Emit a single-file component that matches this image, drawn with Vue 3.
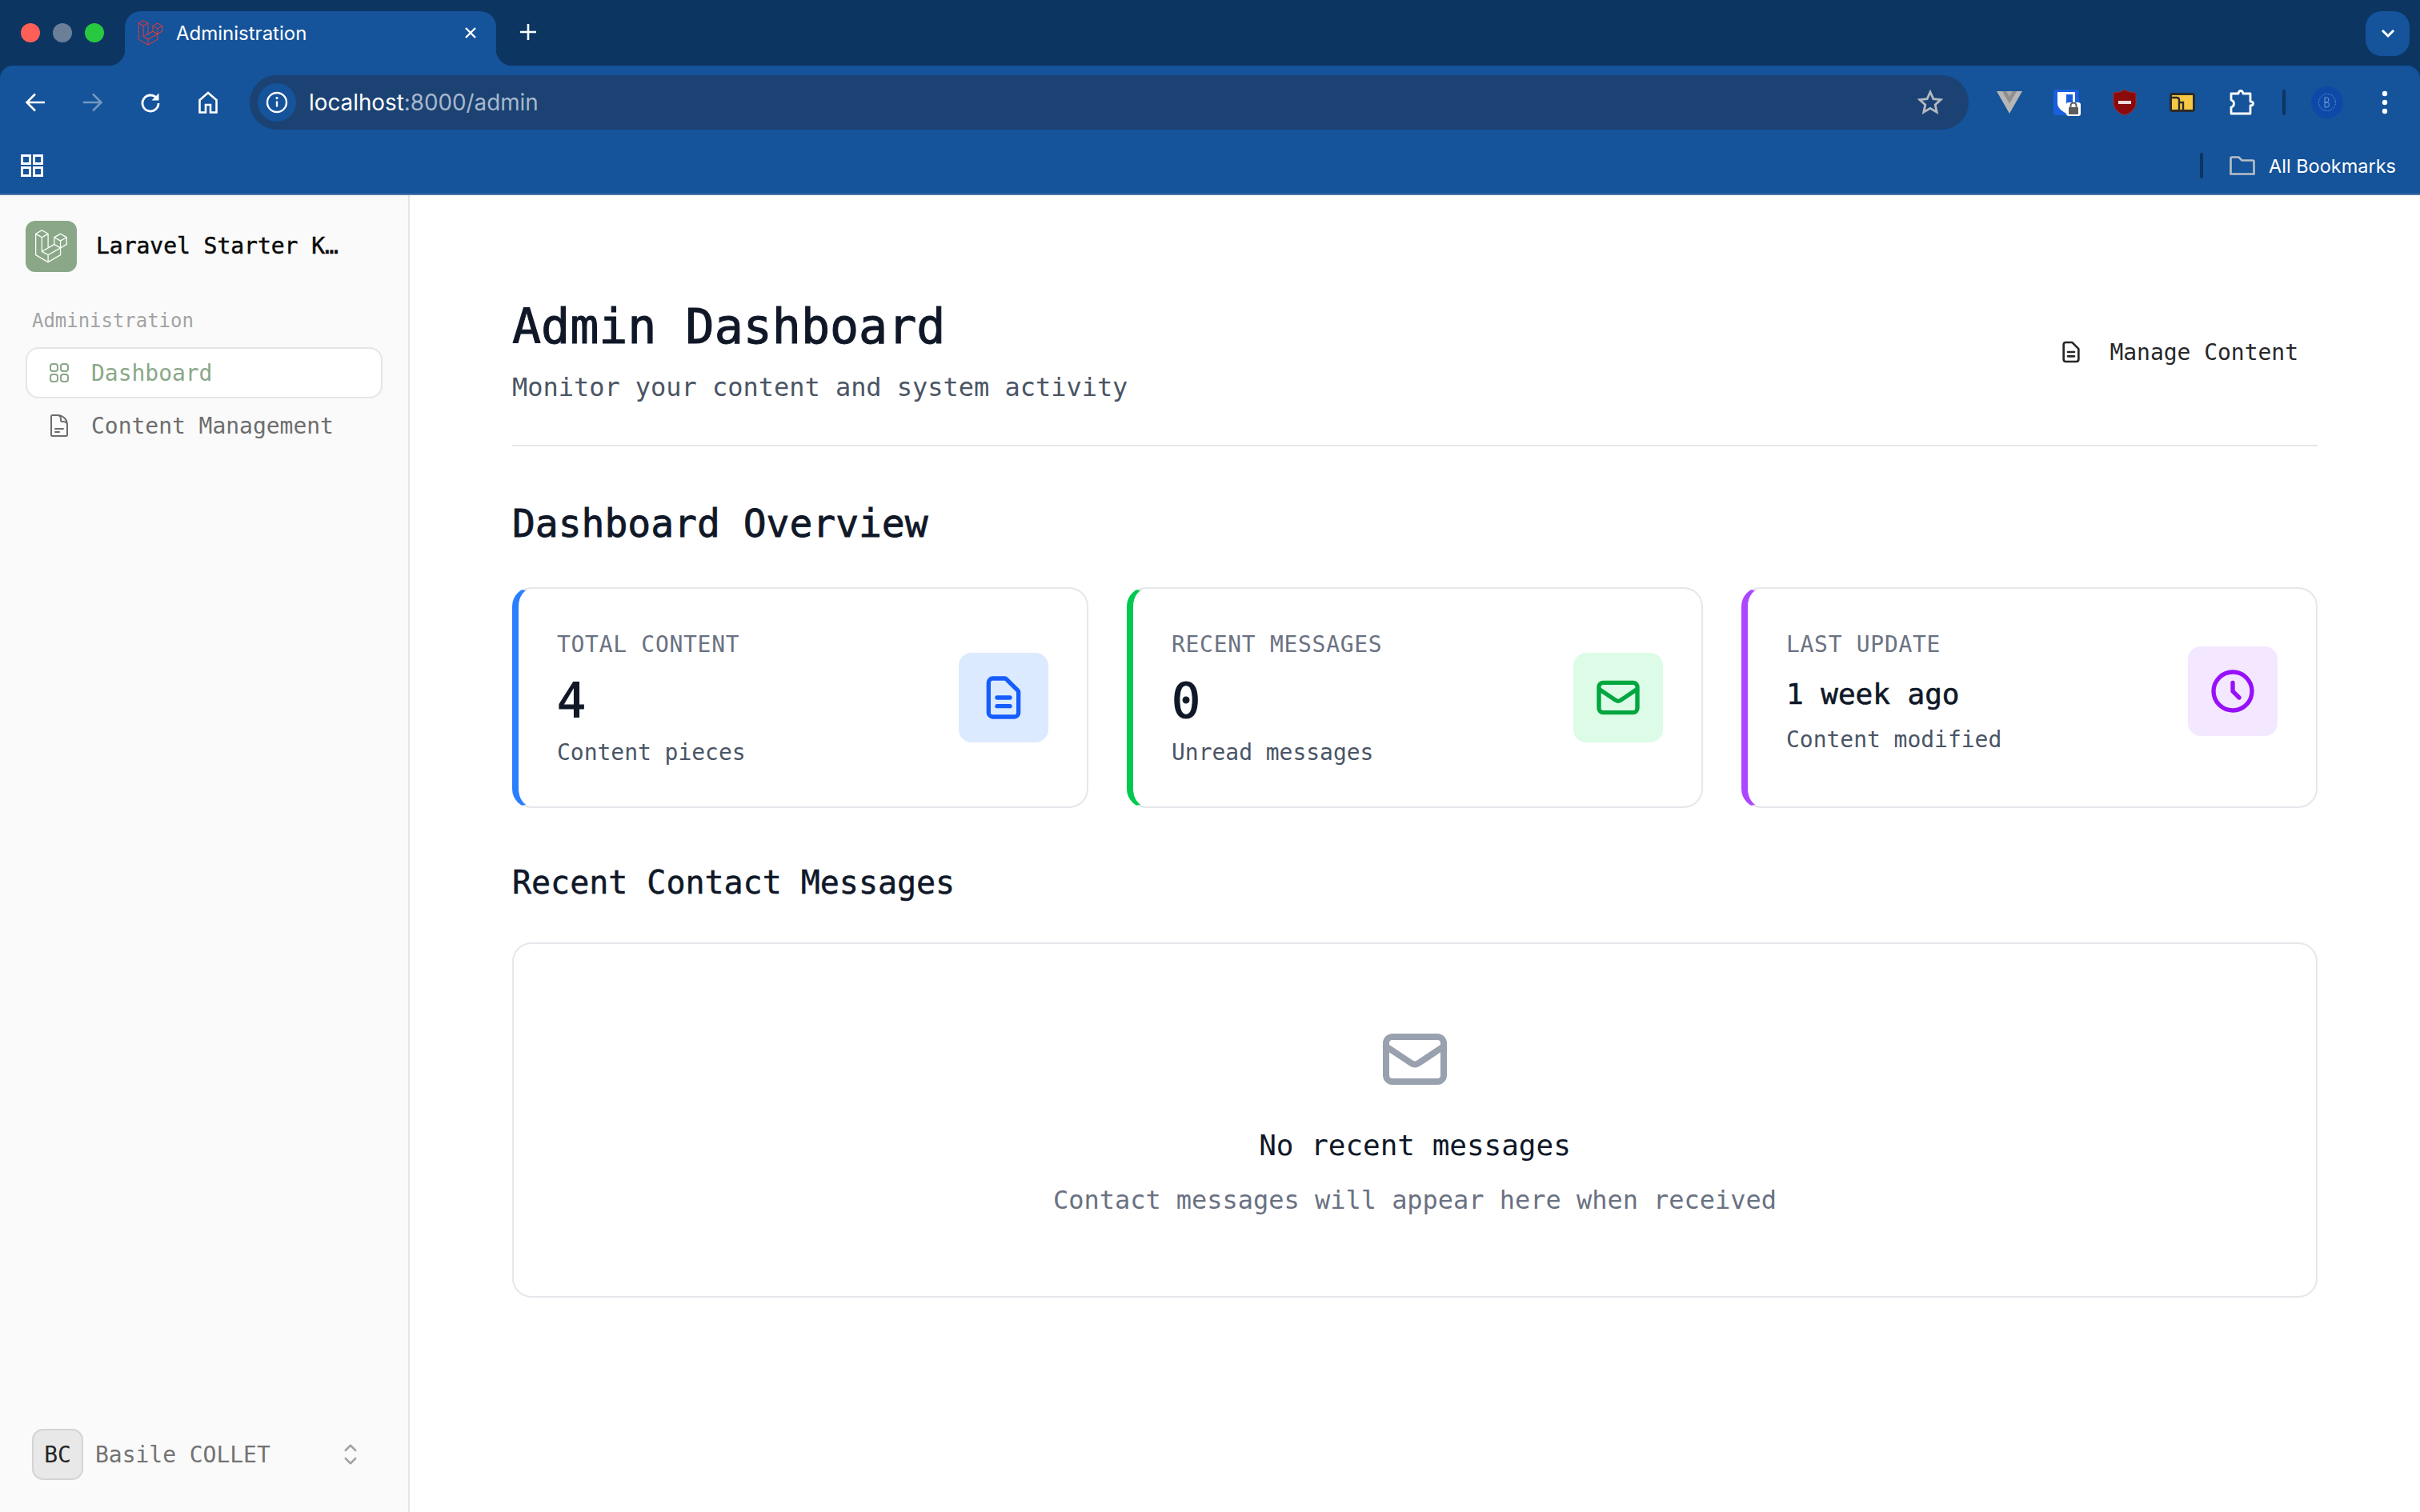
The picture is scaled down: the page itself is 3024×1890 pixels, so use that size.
<script setup>
const laravel = 'M61.8548 14.6253C61.8778 14.7102 61.8895 14.7978 61.8897 14.8858V28.5615C61.8898 28.737 61.8434 28.9095 61.7554 29.0614C61.6675 29.2132 61.5409 29.3392 61.3887 29.4265L49.9104 36.0351V49.1337C49.9104 49.4902 49.7209 49.8192 49.4118 49.9987L25.4519 63.7916C25.3971 63.8227 25.3372 63.8427 25.2774 63.8639C25.255 63.8714 25.2338 63.8851 25.2101 63.8913C25.0426 63.9354 24.8666 63.9354 24.6991 63.8913C24.6716 63.8838 24.6467 63.8689 24.6205 63.8589C24.5657 63.8389 24.5084 63.8215 24.456 63.7916L0.501061 49.9987C0.348882 49.9113 0.222437 49.7853 0.134469 49.6334C0.0465019 49.4816 0.000120578 49.3092 0 49.1337L0 8.10652C0 8.01678 0.0124642 7.92953 0.0348998 7.84477C0.0423783 7.8161 0.0598282 7.78993 0.0697995 7.76126C0.0884958 7.70891 0.105946 7.65531 0.133367 7.6067C0.152063 7.5743 0.179485 7.54812 0.20192 7.51821C0.230588 7.47832 0.256763 7.43719 0.290416 7.40229C0.319084 7.37362 0.356476 7.35243 0.388883 7.32751C0.425029 7.29759 0.457436 7.26518 0.498568 7.2415L12.4779 0.345059C12.6296 0.257786 12.8015 0.211853 12.9765 0.211853C13.1515 0.211853 13.3234 0.257786 13.475 0.345059L25.4531 7.2415H25.4556C25.4955 7.26643 25.5292 7.29759 25.5653 7.32626C25.5977 7.35119 25.6339 7.37362 25.6625 7.40104C25.6974 7.43719 25.7224 7.47832 25.7523 7.51821C25.7735 7.54812 25.8021 7.5743 25.8196 7.6067C25.8483 7.65656 25.8645 7.70891 25.8844 7.76126C25.8944 7.78993 25.9118 7.8161 25.9193 7.84602C25.9423 7.93096 25.954 8.01853 25.9542 8.10652V33.7317L35.9355 27.9844V14.8846C35.9355 14.7973 35.948 14.7088 35.9704 14.6253C35.9792 14.5954 35.9954 14.5692 36.0053 14.5405C36.0253 14.4882 36.0427 14.4346 36.0702 14.386C36.0888 14.3536 36.1163 14.3274 36.1375 14.2975C36.1674 14.2576 36.1923 14.2165 36.2272 14.1816C36.2559 14.1529 36.292 14.1317 36.3244 14.1068C36.3618 14.0769 36.3942 14.0445 36.4341 14.0208L48.4147 7.12434C48.5663 7.03694 48.7383 6.99094 48.9133 6.99094C49.0883 6.99094 49.2602 7.03694 49.4118 7.12434L61.3899 14.0208C61.4323 14.0457 61.4647 14.0769 61.5021 14.1055C61.5333 14.1305 61.5694 14.1529 61.5981 14.1803C61.633 14.2165 61.6579 14.2576 61.6878 14.2975C61.7103 14.3274 61.7377 14.3536 61.7551 14.386C61.7838 14.4346 61.8 14.4882 61.8199 14.5405C61.8312 14.5692 61.8474 14.5954 61.8548 14.6253ZM59.893 27.9844V16.6121L55.7013 19.0252L49.9104 22.3593V33.7317L59.8942 27.9844H59.893ZM47.9149 48.5566V37.1768L42.2187 40.4299L25.953 49.7133V61.2003L47.9149 48.5566ZM1.99677 9.83281V48.5566L23.9562 61.199V49.7145L12.4841 43.2219L12.4804 43.2194L12.4754 43.2169C12.4368 43.1945 12.4044 43.1621 12.3682 43.1347C12.3371 43.1097 12.3009 43.0898 12.2735 43.0624L12.271 43.0586C12.2386 43.0275 12.2162 42.9888 12.1887 42.9539C12.1638 42.9203 12.1339 42.8916 12.114 42.8567L12.1127 42.853C12.0903 42.8156 12.0766 42.7707 12.0604 42.7283C12.0442 42.6909 12.023 42.656 12.013 42.6161C12.0005 42.5688 11.998 42.5177 11.9931 42.4691C11.9881 42.4317 11.9781 42.3943 11.9781 42.3569V15.5801L6.18848 12.2446L1.99677 9.83281ZM12.9777 2.36177L2.99764 8.10652L12.9752 13.8513L22.9541 8.10527L12.9752 2.36177H12.9777ZM18.1678 38.2138L23.9574 34.8809V9.83281L19.7657 12.2459L13.9749 15.5801V40.6281L18.1678 38.2138ZM48.9133 9.14105L38.9344 14.8858L48.9133 20.6305L58.8909 14.8846L48.9133 9.14105ZM47.9149 22.3593L42.124 19.0252L37.9323 16.6121V27.9844L43.7219 31.3174L47.9149 33.7317V22.3593ZM24.9533 47.987L39.59 39.631L46.9065 35.4555L36.9352 29.7145L25.4544 36.3242L14.9907 42.3482L24.9533 47.987Z';
const docSolid = 'M9 12h6m-6 4h6m2 5H7a2 2 0 01-2-2V5a2 2 0 012-2h5.586a1 1 0 01.707.293l5.414 5.414a1 1 0 01.293.707V19a2 2 0 01-2 2z';
const docOutline = 'M19.5 14.25v-2.625a3.375 3.375 0 0 0-3.375-3.375h-1.5A1.125 1.125 0 0 1 13.5 7.125v-1.5a3.375 3.375 0 0 0-3.375-3.375H8.25m0 12.75h7.5m-7.5 3H12M10.5 2.25H5.625c-.621 0-1.125.504-1.125 1.125v17.25c0 .621.504 1.125 1.125 1.125h12.75c.621 0 1.125-.504 1.125-1.125V11.25a9 9 0 0 0-9-9Z';
const mail = 'M3 8l7.89 5.26a2 2 0 002.22 0L21 8M5 19h14a2 2 0 002-2V7a2 2 0 00-2-2H5a2 2 0 00-2 2v10a2 2 0 002 2z';
const clock = 'M12 8v4l3 3m6-3a9 9 0 11-18 0 9 9 0 0118 0z';
const squares = 'M3.75 6A2.25 2.25 0 0 1 6 3.75h2.25A2.25 2.25 0 0 1 10.5 6v2.25a2.25 2.25 0 0 1-2.25 2.25H6a2.25 2.25 0 0 1-2.25-2.25V6ZM3.75 15.75A2.25 2.25 0 0 1 6 13.5h2.25a2.25 2.25 0 0 1 2.25 2.25V18a2.25 2.25 0 0 1-2.25 2.25H6A2.25 2.25 0 0 1 3.75 18v-2.25ZM13.5 6a2.25 2.25 0 0 1 2.25-2.25H18A2.25 2.25 0 0 1 20.25 6v2.25A2.25 2.25 0 0 1 18 10.5h-2.25a2.25 2.25 0 0 1-2.25-2.25V6ZM13.5 15.75a2.25 2.25 0 0 1 2.25-2.25H18a2.25 2.25 0 0 1 2.25 2.25V18A2.25 2.25 0 0 1 18 20.25h-2.25A2.25 2.25 0 0 1 13.5 18v-2.25Z';

const stats = [
    { label: 'Total Content', value: '4', note: 'Content pieces', tone: 'blue', icon: docSolid },
    { label: 'Recent Messages', value: '0', note: 'Unread messages', tone: 'green', icon: mail },
    { label: 'Last Update', value: '1 week ago', note: 'Content modified', tone: 'purple', icon: clock, small: true },
];
</script>

<template>
    <div class="page">
        <header class="chrome">
            <div class="tabstrip">
                <div class="lights">
                    <span class="light red"></span>
                    <span class="light gray"></span>
                    <span class="light green"></span>
                </div>
                <div class="tab">
                    <svg class="favicon" viewBox="0 0 62 65" fill="#e03a3e"><path :d="laravel" /></svg>
                    <span class="tab-title">Administration</span>
                    <svg class="tab-close" viewBox="0 0 16 16" fill="none" stroke="#fff" stroke-width="2.4"><path d="M2 2l12 12M14 2 2 14" /></svg>
                </div>
                <svg class="new-tab" viewBox="0 0 22 22" fill="none" stroke="#fff" stroke-width="2.6"><path d="M11 1v20M1 11h20" /></svg>
                <div class="tab-menu">
                    <svg width="18" height="12" viewBox="0 0 18 12" fill="none" stroke="#fff" stroke-width="3"><path d="M2 2l7 7 7-7" /></svg>
                </div>
            </div>

            <div class="toolbar">
                <div class="tool">
                    <svg width="26" height="24" viewBox="0 0 26 24" fill="none" stroke="#fff" stroke-width="2.5"><path d="M25 12H3M13 1.5 2.5 12 13 22.5" /></svg>
                </div>
                <div class="tool dim">
                    <svg width="26" height="24" viewBox="0 0 26 24" fill="none" stroke="#fff" stroke-width="2.5"><path d="M1 12h22M13 1.5 23.5 12 13 22.5" /></svg>
                </div>
                <div class="tool">
                    <svg width="26" height="26" viewBox="0 0 26 26" fill="none" stroke="#fff" stroke-width="2.8"><path d="M21 8A10 10 0 1 0 23 14" /><path d="M23.5 1.5v9h-9z" fill="#fff" stroke="none" /></svg>
                </div>
                <div class="tool">
                    <svg width="26" height="28" viewBox="0 0 26 28" fill="none" stroke="#fff" stroke-width="2.6"><path d="M2.5 26.5V11L13 2l10.5 9v15.5H16V17h-6v9.5Z" /></svg>
                </div>

                <div class="omnibox">
                    <div class="site-info">
                        <svg width="28" height="28" viewBox="0 0 28 28" fill="none" stroke="#fff" stroke-width="2.4"><circle cx="14" cy="14" r="12" /><path d="M14 12.5v7" /><circle cx="14" cy="8.6" r="1.6" fill="#fff" stroke="none" /></svg>
                    </div>
                    <div class="url">localhost<span class="url-rest">:8000/admin</span></div>
                    <svg class="star" viewBox="0 0 32 32" fill="none" stroke="#b4b9c1" stroke-width="2.8"><path d="M16 3l3.9 8.6 9.3 1-7 6.3 2 9.2L16 23.4 7.800 28.100l2-9.200-7-6.300 9.300-1z" /></svg>
                </div>

                <div class="tool">
                    <svg width="32" height="28" viewBox="0 0 32 28"><path d="M0 0h32L16 28z" fill="#b6b6b6" /><path d="M7 0h18l-9 15.500z" fill="#8f8f8f" /><path d="M12 0h8l-4 7z" fill="#acacac" /></svg>
                </div>
                <div class="tool">
                    <svg width="34" height="34" viewBox="0 0 34 34">
                        <rect y="1" width="32" height="32" rx="3" fill="#1a5fdc" />
                        <path d="M5 4h22v14c0 6-6 10-11 13-5-3-11-7-11-13z" fill="#fff" />
                        <path d="M16 7h8v11c0 4-4 7-8 9z" fill="#1a5fdc" />
                        <rect x="16" y="17" width="18" height="17" rx="3" fill="#fff" />
                        <rect x="19" y="23" width="12" height="9" rx="1" fill="#5c5c5c" />
                        <path d="M21.500 23v-2a3.500 3.500 0 0 1 7 0v2" fill="none" stroke="#5c5c5c" stroke-width="2" />
                    </svg>
                </div>
                <div class="tool">
                    <svg width="30" height="34" viewBox="0 0 30 34"><path d="M15 1c3 2.600 8 3.600 14 3.800V18c0 7-6 12-14 15C7 30 1 25 1 18V4.800C7 4.600 12 3.600 15 1z" fill="#8b0a0a" stroke="#a33" stroke-width=".8" /><rect x="7" y="15" width="16" height="4" fill="#f0dcdc" /></svg>
                </div>
                <div class="tool">
                    <svg width="32" height="24" viewBox="0 0 32 24"><rect x="1.500" y="1.500" width="29" height="21" rx="2" fill="#f7c844" stroke="#2b2b2b" stroke-width="3" /><path d="M2 6h7q3 0 3 3v13M12 22V12h5v10" fill="none" stroke="#2b2b2b" stroke-width="2.400" /></svg>
                </div>
                <div class="tool tool-puzzle">
                    <svg width="34" height="34" viewBox="0 0 34 34" fill="none" stroke="#fff" stroke-width="2.800" stroke-linejoin="round"><path d="M4 6h9q.5-3.500 3-3.500T19 6h9v10q3.500 0 3.500 2.500T28 21v10H4v-8q3.500-1 3.500-4.500T4 14z" /></svg>
                </div>
                <div class="tool-sep"><span></span></div>
                <div class="tool">
                    <div class="profile">
                        <svg width="24" height="24" viewBox="0 0 24 24" fill="none" stroke="#7ba0dc" stroke-width="1"><circle cx="12" cy="12" r="10.500" stroke-dasharray="1 1" /><path d="M9 6v12M9 6h2.500q2.500 0 2.500 3t-5 3h3q2.500 0 2.500 3t-3 3H9" /></svg>
                    </div>
                </div>
                <div class="tool">
                    <svg width="8" height="30" viewBox="0 0 8 30" fill="#fff"><circle cx="4" cy="4" r="3.200" /><circle cx="4" cy="15" r="3.200" /><circle cx="4" cy="26" r="3.200" /></svg>
                </div>
            </div>

            <div class="bookmarks">
                <svg width="28" height="28" viewBox="0 0 28 28" fill="none" stroke="#fff" stroke-width="3"><path d="M1.500 1.500h10v10h-10zM16.500 1.500h10v10h-10zM1.500 16.500h10v10h-10zM16.500 16.500h10v10h-10z" /></svg>
                <span class="bm-sep"></span>
                <svg width="32" height="24" viewBox="0 0 32 24" fill="none" stroke="#b9bec6" stroke-width="2.600"><path d="M1.500 22.500V3q0-1.500 1.500-1.500h8.500l4 4H29q1.500 0 1.500 1.500v15.500z" /></svg>
                <span class="bm-label">All Bookmarks</span>
            </div>
        </header>

        <div class="shell">
            <aside class="sidebar">
                <div class="brand">
                    <div class="brand-logo">
                        <svg width="40" height="42" viewBox="0 0 62 65" fill="#fff"><path :d="laravel" /></svg>
                    </div>
                    <span class="brand-name">Laravel Starter Kit</span>
                </div>

                <div class="nav-group">Administration</div>
                <nav class="nav">
                    <a class="nav-item active">
                        <svg class="nav-icon" viewBox="0 0 24 24" fill="none" stroke="currentColor" stroke-width="1.500"><path :d="squares" /></svg>
                        <span>Dashboard</span>
                    </a>
                    <a class="nav-item">
                        <svg class="nav-icon" viewBox="0 0 24 24" fill="none" stroke="currentColor" stroke-width="1.500" stroke-linecap="round" stroke-linejoin="round"><path :d="docOutline" /></svg>
                        <span>Content Management</span>
                    </a>
                </nav>

                <div class="user">
                    <div class="avatar">BC</div>
                    <span class="user-name">Basile COLLET</span>
                    <svg class="updown" viewBox="0 0 24 24" fill="none" stroke="currentColor" stroke-width="1.500" stroke-linecap="round" stroke-linejoin="round"><path d="M8.250 15 12 18.750 15.750 15m-7.500-6L12 5.250 15.750 9" /></svg>
                </div>
            </aside>

            <main class="main">
                <div class="head">
                    <div>
                        <h1>Admin Dashboard</h1>
                        <p class="subtitle">Monitor your content and system activity</p>
                    </div>
                    <a class="manage">
                        <svg class="manage-icon" viewBox="0 0 24 24" fill="none" stroke="currentColor" stroke-width="2" stroke-linecap="round" stroke-linejoin="round"><path :d="docSolid" /></svg>
                        <span>Manage Content</span>
                    </a>
                </div>

                <h2>Dashboard Overview</h2>

                <div class="stats">
                    <div v-for="s in stats" :key="s.label" class="stat" :class="s.tone">
                        <div class="stat-row">
                            <div class="stat-text">
                                <div class="stat-label">{{ s.label }}</div>
                                <div class="stat-value" :class="{ small: s.small }">{{ s.value }}</div>
                                <div class="stat-note">{{ s.note }}</div>
                            </div>
                            <div class="stat-icon">
                                <svg viewBox="0 0 24 24" fill="none" stroke="currentColor" stroke-width="2" stroke-linecap="round" stroke-linejoin="round"><path :d="s.icon" /></svg>
                            </div>
                        </div>
                    </div>
                </div>

                <h3>Recent Contact Messages</h3>

                <div class="empty">
                    <svg class="empty-icon" viewBox="0 0 24 24" fill="none" stroke="currentColor" stroke-width="2" stroke-linecap="round" stroke-linejoin="round"><path :d="mail" /></svg>
                    <div class="empty-title">No recent messages</div>
                    <div class="empty-note">Contact messages will appear here when received</div>
                </div>
            </main>
        </div>
    </div>
</template>

<style>
html, body {
    margin: 0;
    background: #fff;
}
</style>

<style scoped>
.page {
    height: 100vh;
    display: flex;
    flex-direction: column;
    overflow: hidden;
    font-family: "DejaVu Sans Mono", "Liberation Mono", monospace;
    letter-spacing: -0.002em;
    color: #101828;
}

/* browser frame */
.chrome {
    background: #0c3561;
    font-family: Inter, "Liberation Sans", sans-serif;
    letter-spacing: 0;
    color: #fff;
}

.tabstrip {
    height: 82px;
    display: flex;
    align-items: center;
    padding: 0 13px 0 26px;
}

.lights {
    display: flex;
    gap: 16px;
}

.light {
    width: 24px;
    height: 24px;
    border-radius: 50%;
}

.light.red { background: #ff5f57; }
.light.gray { background: #6b7f99; }
.light.green { background: #28c840; }

.tab {
    position: relative;
    align-self: flex-end;
    width: 464px;
    height: 68px;
    margin-left: 26px;
    padding: 0 24px 14px 16px;
    box-sizing: border-box;
    display: flex;
    align-items: center;
    gap: 16px;
    background: #15539a;
    border-radius: 20px 20px 0 0;
}

.tab::before,
.tab::after {
    content: "";
    position: absolute;
    bottom: 0;
    width: 20px;
    height: 20px;
}

.tab::before {
    left: -20px;
    background: radial-gradient(circle at 0 0, #0c3561 20px, #15539a 20.500px);
}

.tab::after {
    right: -20px;
    background: radial-gradient(circle at 100% 0, #0c3561 20px, #15539a 20.500px);
}

.favicon {
    width: 32px;
    height: 32px;
}

.tab-title {
    flex: 1;
    font-size: 24px;
}

.tab-close {
    width: 16px;
    height: 16px;
}

.new-tab {
    width: 22px;
    height: 22px;
    margin-left: 29px;
    margin-top: -2px;
}

.tab-menu {
    margin-left: auto;
    align-self: flex-start;
    margin-top: 14px;
    width: 55px;
    height: 56px;
    border-radius: 20px;
    background: #15539a;
    display: flex;
    align-items: center;
    justify-content: center;
}

.toolbar {
    height: 92px;
    padding: 12px 8px;
    box-sizing: border-box;
    display: flex;
    align-items: center;
    background: #15539a;
    border-radius: 16px 16px 0 0;
}

.tool {
    width: 72px;
    height: 68px;
    flex: none;
    display: flex;
    align-items: center;
    justify-content: center;
}

.tool.dim svg {
    opacity: 0.4;
}

.tool-puzzle {
    padding-left: 3px;
    box-sizing: border-box;
}

.omnibox {
    flex: 1;
    height: 68px;
    margin: 0 15px 0 16px;
    padding: 0 8px 0 10px;
    display: flex;
    align-items: center;
    background: #1b4273;
    border-radius: 34px;
}

.site-info {
    width: 48px;
    height: 48px;
    border-radius: 50%;
    background: #15539a;
    display: flex;
    align-items: center;
    justify-content: center;
}

.url {
    flex: 1;
    margin-left: 16px;
    font-size: 27.8px;
}

.url-rest {
    color: #a8b8cc;
}

.star {
    width: 32px;
    height: 32px;
    margin-right: 24px;
}

.tool-sep {
    width: 37px;
    display: flex;
    justify-content: center;
}

.tool-sep span {
    width: 4px;
    height: 32px;
    border-radius: 2px;
    background: #0c3561;
}

.profile {
    width: 40px;
    height: 40px;
    border-radius: 50%;
    background: #0d4aa8;
    display: flex;
    align-items: center;
    justify-content: center;
}

.bookmarks {
    height: 70px;
    padding: 0 30px 2px 26px;
    box-sizing: border-box;
    display: flex;
    align-items: center;
    background: #15539a;
    border-bottom: 2px solid #4a76aa;
}

.bm-sep {
    width: 4px;
    height: 32px;
    margin-left: auto;
    margin-right: 33px;
    border-radius: 2px;
    background: #0c3561;
}

.bm-label {
    margin-left: 17px;
    font-size: 23.5px;
}

/* app */
.shell {
    flex: 1;
    min-height: 0;
    display: flex;
}

.sidebar {
    width: 512px;
    flex: none;
    box-sizing: border-box;
    padding: 32px 32px 40px;
    display: flex;
    flex-direction: column;
    background: #fafafa;
    border-right: 2px solid #e5e5e5;
}

.brand {
    display: flex;
    align-items: center;
    gap: 24px;
}

.brand-logo {
    width: 64px;
    height: 64px;
    flex: none;
    border-radius: 12px;
    background: #8aa888;
    display: flex;
    align-items: center;
    justify-content: center;
}

.brand-name {
    width: 310px;
    overflow: hidden;
    white-space: nowrap;
    text-overflow: ellipsis;
    font-size: 28px;
    line-height: 40px;
    color: #0a0a0a;
    -webkit-text-stroke: 0.5px #0a0a0a;
}

.nav-group {
    margin: 45px 0 17px 8px;
    font-size: 24px;
    line-height: 32px;
    color: #a3a3a3;
}

.nav {
    display: flex;
    flex-direction: column;
    gap: 2px;
}

.nav-item {
    height: 64px;
    box-sizing: border-box;
    padding: 0 24px;
    display: flex;
    align-items: center;
    gap: 24px;
    border: 2px solid transparent;
    border-radius: 16px;
    font-size: 28px;
    color: #6e6e6e;
}

.nav-item.active {
    background: #fff;
    border-color: #e5e5e5;
    color: #8aa888;
}

.nav-icon {
    width: 32px;
    height: 32px;
    flex: none;
}

.user {
    margin-top: auto;
    padding-left: 8px;
    display: flex;
    align-items: center;
}

.avatar {
    width: 64px;
    height: 64px;
    box-sizing: border-box;
    flex: none;
    display: flex;
    align-items: center;
    justify-content: center;
    background: #e8e8e8;
    border: 2px solid #d4d4d4;
    border-radius: 14px;
    font-size: 28px;
    color: #262626;
}

.user-name {
    margin-left: 15px;
    font-size: 28px;
    color: #737373;
}

.updown {
    width: 40px;
    height: 40px;
    margin-left: auto;
    margin-right: 20px;
    color: #a3a3a3;
}

.main {
    flex: 1;
    min-width: 0;
    padding: 128px 128px 0;
}

.head {
    display: flex;
    align-items: center;
    justify-content: space-between;
    padding-bottom: 48px;
    border-bottom: 2px solid #e5e7eb;
}

h1 {
    margin: 0;
    font-size: 60px;
    line-height: 72px;
    font-weight: 400;
    -webkit-text-stroke: 1px #101828;
}

.subtitle {
    margin: 16px 0 0;
    font-size: 32px;
    line-height: 48px;
    color: #4a5565;
}

.manage {
    display: flex;
    align-items: center;
    gap: 32px;
    padding: 0 24px;
    font-size: 28px;
    color: #27272a;
}

.manage-icon {
    width: 32px;
    height: 32px;
}

h2 {
    margin: 64px 0 48px;
    font-size: 48px;
    line-height: 64px;
    font-weight: 400;
    -webkit-text-stroke: 0.8px #101828;
}

.stats {
    display: grid;
    grid-template-columns: repeat(3, 1fr);
    gap: 48px;
}

.stat {
    padding: 48px;
    background: #fff;
    border: 2px solid #e5e7eb;
    border-left: 8px solid;
    border-radius: 24px;
}

.stat.blue { border-left-color: #2b7fff; }
.stat.green { border-left-color: #00c950; }
.stat.purple { border-left-color: #ad46ff; }

.stat-row {
    display: flex;
    align-items: center;
    justify-content: space-between;
}

.stat-label {
    padding-top: 2px;
    font-size: 28px;
    line-height: 40px;
    letter-spacing: 0.025em;
    text-transform: uppercase;
    color: #6a7282;
}

.stat-value {
    margin-top: 14px;
    font-size: 60px;
    line-height: 72px;
    -webkit-text-stroke: 1.2px #101828;
}

.stat-value.small {
    font-size: 36px;
    line-height: 56px;
    -webkit-text-stroke: 0.6px #101828;
}

.stat-note {
    margin-top: 9px;
    margin-bottom: -1px;
    font-size: 28px;
    line-height: 40px;
    color: #4a5565;
}

.stat-icon {
    width: 112px;
    height: 112px;
    flex: none;
    box-sizing: border-box;
    padding: 24px;
    border-radius: 16px;
}

.stat-icon svg {
    display: block;
    width: 64px;
    height: 64px;
}

.blue .stat-icon { background: #dbeafe; color: #155dfc; }
.green .stat-icon { background: #dcfce7; color: #00a63e; }
.purple .stat-icon { background: #f3e8ff; color: #9810fa; }

h3 {
    margin: 65px 0 47px;
    font-size: 40px;
    line-height: 56px;
    font-weight: 400;
    -webkit-text-stroke: 0.5px #101828;
}

.empty {
    padding: 96px;
    display: flex;
    flex-direction: column;
    align-items: center;
    border: 2px solid #e5e7eb;
    border-radius: 24px;
}

.empty-icon {
    width: 96px;
    height: 96px;
    color: #99a1af;
}

.empty-title {
    margin-top: 32px;
    font-size: 36px;
    line-height: 56px;
}

.empty-note {
    margin-top: 16px;
    font-size: 32px;
    line-height: 48px;
    color: #6a7282;
}
</style>
